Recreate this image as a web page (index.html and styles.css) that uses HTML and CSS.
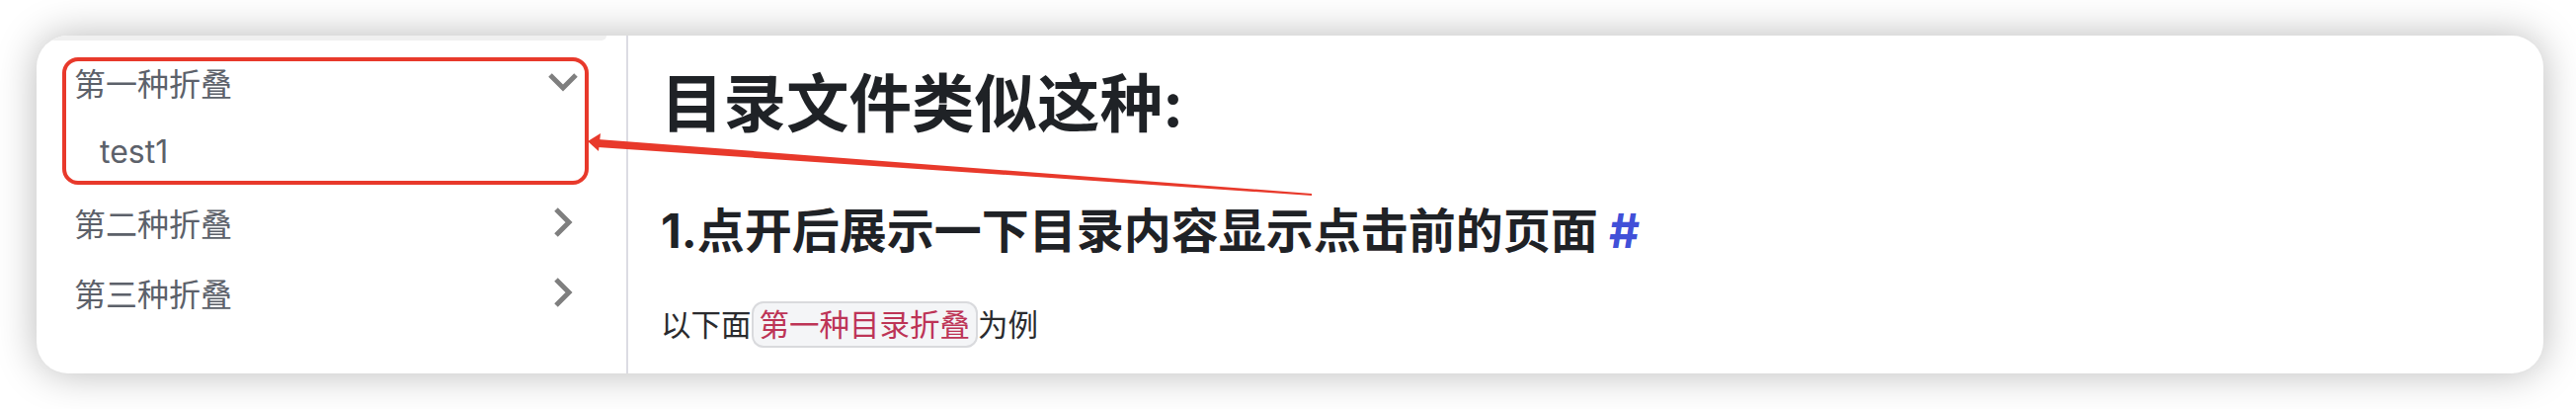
FILE: index.html
```html
<!DOCTYPE html>
<html lang="zh-CN">
<head>
<meta charset="utf-8">
<title>目录折叠</title>
<link rel="stylesheet" href="styles.css">
</head>
<body>
<div class="page">
  <div class="card">
    <aside class="sidebar">
      <div class="sidebar-top"></div>
      <div class="nav-item">
        <span>第一种折叠</span>
        <svg class="chev" viewBox="0 0 32 32"><polyline points="3,9 16,22 29,9"/></svg>
      </div>
      <div class="nav-sub">test1</div>
      <div class="nav-item">
        <span>第二种折叠</span>
        <svg class="chev" viewBox="0 0 32 32"><polyline points="9,3 22,16 9,29"/></svg>
      </div>
      <div class="nav-item">
        <span>第三种折叠</span>
        <svg class="chev" viewBox="0 0 32 32"><polyline points="9,3 22,16 9,29"/></svg>
      </div>
    </aside>
    <main class="content">
      <h1>目录文件类似这种:</h1>
      <h2>1.点开后展示一下目录内容显示点击前的页面 <a class="anchor" href="#">#</a></h2>
      <p>以下面<code>第一种目录折叠</code>为例</p>
    </main>
  </div>
  <div class="annot-box"></div>
  <svg class="annot-arrow" viewBox="0 0 2608 414">
    <polygon points="605,141 1328,196 1328,198 605,149"/>
    <polygon points="595,143 608,135 606,153"/>
  </svg>
</div>
</body>
</html>
```

FILE: styles.css
```css
html, body {
  margin: 0;
  padding: 0;
  background: #ffffff;
}

body {
  width: 2608px;
  height: 414px;
  overflow: hidden;
  font-family: Inter, "Noto Sans CJK SC", sans-serif;
}

.page {
  position: relative;
  padding: 36px 33px 36px 37px;
}

.card {
  display: flex;
  height: 342px;
  background: #ffffff;
  border-radius: 32px;
  box-shadow: 0 0 40px rgba(0, 0, 0, 0.28);
  overflow: hidden;
}

.sidebar {
  flex: none;
  width: 597px;
  border-right: 2px solid #dcdce3;
}

.sidebar-top {
  height: 5px;
  margin-right: 20px;
  background: #f0f0f0;
  border-bottom-right-radius: 7px;
}

.nav-item {
  display: flex;
  align-items: center;
  justify-content: space-between;
  height: 71px;
  padding: 0 48px 0 38px;
  font-size: 32px;
  color: #5c616a;
}

.sidebar-top + .nav-item {
  margin-top: 6px;
}

.nav-sub {
  display: flex;
  align-items: center;
  height: 71px;
  padding-left: 64px;
  font-size: 32px;
  color: #5c616a;
}

.chev {
  width: 32px;
  height: 32px;
  fill: none;
  stroke: #7f7f7f;
  stroke-width: 5;
}

.content {
  flex: 1;
  padding: 33px 0 0 33px;
  color: #1f2226;
}

.content h1 {
  margin: 0;
  font-size: 63.5px;
  line-height: 72px;
  font-weight: 700;
}

.content h2 {
  margin: 63px 0 0;
  font-size: 48px;
  line-height: 60px;
  font-weight: 700;
}

.anchor {
  color: #4150d8;
  text-decoration: none;
}

.content p {
  margin: 42px 0 0;
  font-size: 30.5px;
  line-height: 46px;
  color: #2a2b2e;
}

.content code {
  font-family: Inter, "Noto Sans CJK SC", sans-serif;
  font-size: 30.5px;
  color: #bd3456;
  background: #f4f5f7;
  border: 2px solid #d9dadd;
  border-radius: 12px;
  padding: 3px 6px;
}

.annot-box {
  position: absolute;
  left: 63px;
  top: 58px;
  width: 533px;
  height: 129px;
  box-sizing: border-box;
  border: 4px solid #e8392b;
  border-radius: 16px;
}

.annot-arrow {
  position: absolute;
  left: 0;
  top: 0;
  width: 2608px;
  height: 414px;
  fill: #e8392b;
  pointer-events: none;
}
```
